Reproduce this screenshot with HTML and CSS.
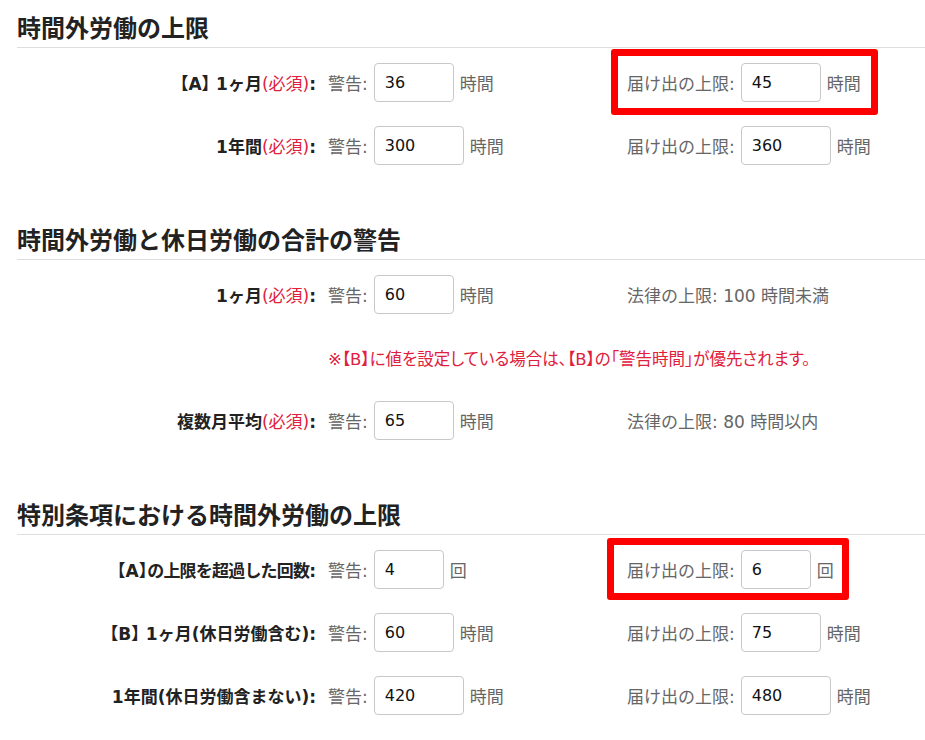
FILE: index.html
```html
<!DOCTYPE html>
<html lang="ja">
<head>
    <meta charset="UTF-8">
    <meta name="viewport" content="width=device-width, initial-scale=1.0">
    <title>時間外労働の設定</title>
    <link rel="stylesheet" href="styles.css">
</head>
<body>

<div class="settings">
    <section class="block">
        <h2 class="block-title">時間外労働の上限</h2>
        <div class="rows">
            <div class="row">
                <div class="row-label"><span class="tag spaced"><span class="bo">【</span>A<span class="bc">】</span></span>1ヶ月<span class="req">(必須)</span>:</div>
                <div class="row-field"><span>警告:</span><input class="num w2" value="36"><span>時間</span></div>
                <div class="row-field mark mark-hours"><span>届け出の上限:</span><input class="num w2" value="45"><span>時間</span></div>
            </div>
            <div class="row">
                <div class="row-label">1年間<span class="req">(必須)</span>:</div>
                <div class="row-field"><span>警告:</span><input class="num w3" value="300"><span>時間</span></div>
                <div class="row-field"><span>届け出の上限:</span><input class="num w3" value="360"><span>時間</span></div>
            </div>
        </div>
    </section>

    <section class="block">
        <h2 class="block-title">時間外労働と休日労働の合計の警告</h2>
        <div class="rows">
            <div class="row">
                <div class="row-label">1ヶ月<span class="req">(必須)</span>:</div>
                <div class="row-field"><span>警告:</span><input class="num w2" value="60"><span>時間</span></div>
                <div class="row-field">法律の上限: 100 時間未満</div>
            </div>
            <div class="row">
                <div class="row-note">※【B】に値を設定している場合は、【B】の「警告時間」が優先されます。</div>
            </div>
            <div class="row">
                <div class="row-label">複数月平均<span class="req">(必須)</span>:</div>
                <div class="row-field"><span>警告:</span><input class="num w2" value="65"><span>時間</span></div>
                <div class="row-field">法律の上限: 80 時間以内</div>
            </div>
        </div>
    </section>

    <section class="block">
        <h2 class="block-title">特別条項における時間外労働の上限</h2>
        <div class="rows">
            <div class="row">
                <div class="row-label"><span class="tag"><span class="bo">【</span>A<span class="bc">】</span></span><span class="tight">の上限を超過した回数</span>:</div>
                <div class="row-field"><span>警告:</span><input class="num w1" value="4"><span>回</span></div>
                <div class="row-field mark mark-count"><span>届け出の上限:</span><input class="num w1" value="6"><span>回</span></div>
            </div>
            <div class="row">
                <div class="row-label"><span class="tag spaced"><span class="bo">【</span>B<span class="bc">】</span></span>1ヶ月(休日労働含む):</div>
                <div class="row-field"><span>警告:</span><input class="num w2" value="60"><span>時間</span></div>
                <div class="row-field"><span>届け出の上限:</span><input class="num w2" value="75"><span>時間</span></div>
            </div>
            <div class="row">
                <div class="row-label">1年間(休日労働含まない):</div>
                <div class="row-field"><span>警告:</span><input class="num w3" value="420"><span>時間</span></div>
                <div class="row-field"><span>届け出の上限:</span><input class="num w3" value="480"><span>時間</span></div>
            </div>
        </div>
    </section>
</div>

</body>
</html>
```

FILE: styles.css
```css
body {
    margin: 0;
    font-family: "DejaVu Sans", "Noto Sans CJK JP", sans-serif;
    font-size: 17px;
    color: #222;
    background-color: #fff;
}

.settings {
    padding: 12px 0 0 17px;
}

/* Section */
.block {
    margin-bottom: 47px;
}

.block-title {
    margin: 0;
    padding-bottom: 1px;
    font-size: 24px;
    line-height: 34px;
    font-weight: bold;
    color: #222;
    border-bottom: 1px solid #dedede;
}

.rows {
    margin-top: 3px;
}

/* Row layout */
.row {
    display: grid;
    grid-template-columns: 299px 287px auto;
    column-gap: 12px;
    align-items: center;
    height: 63px;
}

.row-label {
    text-align: right;
    font-weight: bold;
    color: #222;
    white-space: nowrap;
    text-spacing-trim: space-all;
}

/* half-width brackets for 【A】 / 【B】 */
.bo {
    margin-left: -8.5px;
}

.bc {
    letter-spacing: -8.5px;
}

.tag.spaced {
    margin-right: 6px;
}

.tight {
    letter-spacing: -0.8px;
}

.req {
    font-weight: normal;
    color: #e0203c;
}

.row-field {
    display: flex;
    align-items: center;
    gap: 6px;
    color: #666;
    white-space: nowrap;
}

.row-note {
    grid-column: 2 / 4;
    font-size: 16.5px;
    color: #e0203c;
    font-feature-settings: "palt";
    white-space: nowrap;
}

/* Number inputs */
.num {
    box-sizing: border-box;
    height: 39px;
    padding: 0 10px;
    font-family: "DejaVu Sans", sans-serif;
    font-size: 16px;
    color: #111;
    border: 1px solid #c8c8c8;
    border-radius: 4px;
    background-color: #fff;
}

.w1 { width: 70px; }
.w2 { width: 80px; }
.w3 { width: 90px; }

/* Red annotation frame */
.mark {
    position: relative;
    justify-self: start;
}

.mark::after {
    content: "";
    position: absolute;
    border: 7px solid #ff0000;
    border-radius: 3px;
    pointer-events: none;
}

.mark-hours::after {
    top: -14px;
    bottom: -13px;
    left: -16px;
    right: -17px;
}

.mark-count::after {
    top: -12px;
    bottom: -11px;
    left: -20px;
    right: -15px;
}
```
